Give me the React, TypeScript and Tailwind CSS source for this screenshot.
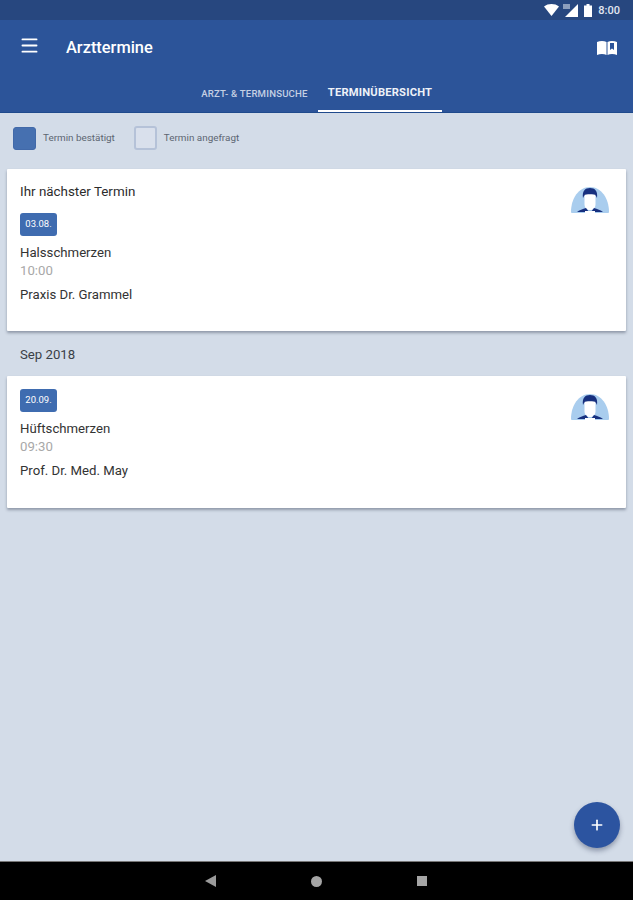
import { Menu, Plus } from "lucide-react"

function StatusBar() {
    return (
        <div className="h-5 bg-[#27477f] flex items-center justify-end pr-[13px]">
            <svg width="15" height="12" viewBox="0 0 15 12" className="mr-[4px]">
                <path d="M0 2.5C4 -.8 11 -.8 15 2.5L7.500 12Z" fill="#fff" />
            </svg>
            <svg width="16" height="13" viewBox="0 0 16 13" className="mr-[5px]">
                <path d="M15 0V13H2Z" fill="#fff" />
                <rect x="0" y="0" width="7" height="5" fill="#8d9fbd" />
            </svg>
            <svg width="8" height="13" viewBox="0 0 8 13" className="mr-[6px]">
                <path d="M2.500 0h3v1.500H8V13H0V1.500h2.500Z" fill="#fff" />
            </svg>
            <span className="text-[11px] leading-none font-medium text-[#e3e8f1]">8:00</span>
        </div>
    )
}

function AppBar() {
    return (
        <div className="h-[93px] bg-[#2c5499] border-b border-[#1f4a8c] flex flex-col">
            <div className="h-[56px] flex items-center pl-[21px] pr-[16px]">
                <Menu size={21} strokeWidth={2.2} className="text-white -ml-[2px] -mt-[5px]" />
                <span className="ml-[26px] text-[16.400px] font-medium text-white">Arzttermine</span>
                <svg width="20" height="16" viewBox="0 0 20 16" className="ml-auto">
                    <path d="M0 2C3 .5 7 .5 9.500 2V15C7 13.800 3 13.800 0 15Z" fill="#fff" />
                    <path d="M10.500 2C13 .5 17 .5 20 2V15C17 13.800 13 13.800 10.500 15Z" fill="#fff" />
                    <path d="M13 3H17V10L15 8.500 13 10Z" fill="#2c5499" />
                </svg>
            </div>
            <div className="flex-1 flex justify-center pl-[3px]">
                <div className="w-[124px] flex items-center justify-center pt-[1px] pr-[4px] text-[9.600px] font-medium tracking-[0.2px] text-[#c5d0e4]">
                    ARZT- &amp; TERMINSUCHE
                </div>
                <div className="w-[124px] ml-[-1px] flex items-center justify-center pt-[1px] pl-[1px] border-b-2 border-white text-[11.200px] font-bold tracking-[0.2px] text-[#eef2f8]">
                    TERMINÜBERSICHT
                </div>
            </div>
        </div>
    )
}

function Legend() {
    return (
        <div className="h-[56px] flex items-center pl-[13px] pb-[6px]">
            <div className="w-[23px] h-[23px] rounded-[3px] bg-[#4670b0] border border-[#4169a9]" />
            <span className="ml-[7px] text-[9.900px] text-[#5d6672]">Termin bestätigt</span>
            <div className="ml-[19px] w-[23px] h-[24px] rounded-[3px] border-2 border-[#b5c2d8] bg-[#d9e0ec]" />
            <span className="ml-[7px] text-[9.900px] text-[#5d6672]">Termin angefragt</span>
        </div>
    )
}

function Avatar() {
    return (
        <svg width="38" height="27" viewBox="0 0 38 27" className="mt-[5px]">
            <path d="M0 25C0 11 8 0 19 0S38 11 38 25C38 26 37 26 36 26H2C1 26 0 26 0 25Z" fill="#a9cdee" />
            <path d="M12 11C11 4 14 1 19 1S27 4 26 11L25 9H13Z" fill="#17307f" />
            <path d="M13.500 8C14 7 24 7 24.500 8V17C24.500 21 22 23 19 23S13.500 21 13.500 17Z" fill="#fff" />
            <path d="M6 25C8 23 12 22 15 21L18 25ZM32 25C30 23 26 22 23 21L20 25Z" fill="#17307f" />
            <rect x="14" y="24" width="10" height="2" fill="#fff" />
        </svg>
    )
}

function DateBadge({ date }: { date: string }) {
    return (
        <div className="w-[37px] h-[23px] rounded-[3px] bg-[#3f6cb0] flex items-center justify-center text-[9.500px] text-white">
            {date}
        </div>
    )
}

function AppointmentCard({ heading, date, title, time, doctor, className }: {
    heading?: string
    date: string
    title: string
    time: string
    doctor: string
    className: string
}) {
    return (
        <div className={`mx-[7px] bg-white rounded-[1px] shadow-[0_2px_3px_rgba(60,70,90,0.45)] flex justify-between pl-[13px] pr-[17px] ${className}`}>
            <div className="text-[13.200px] text-[#333]">
                {heading && <div className="h-[19px] leading-[19px] mb-[12px] text-[13.400px] text-[#2c2c2c]">{heading}</div>}
                <DateBadge date={date} />
                <div className="mt-[8px] h-[18px] leading-[18px]">{title}</div>
                <div className="h-[18px] leading-[18px] text-[#a8a8a8]">{time}</div>
                <div className="mt-[6px] h-[18px] leading-[18px]">{doctor}</div>
            </div>
            <Avatar />
        </div>
    )
}

export default function App() {
    return (
        <div className="relative w-[633px] h-[900px] flex flex-col bg-[#d3dce8] font-['Roboto',sans-serif]">
            <StatusBar />
            <AppBar />
            <Legend />
            <AppointmentCard
                className="h-[162px] pt-[13px]"
                heading="Ihr nächster Termin"
                date="03.08."
                title="Halsschmerzen"
                time="10:00"
                doctor="Praxis Dr. Grammel"
            />
            <div className="h-[45px] pl-[20px] pt-[2px] flex items-center text-[13.200px] text-[#3a3f47]">Sep 2018</div>
            <AppointmentCard
                className="h-[132px] pt-[13px]"
                date="20.09."
                title="Hüftschmerzen"
                time="09:30"
                doctor="Prof. Dr. Med. May"
            />
            <div className="flex-1" />
            <div className="h-[39px] bg-black border-t border-[#777] flex items-center justify-center gap-[95px] pr-[1px]">
                <svg width="11" height="12" viewBox="0 0 11 12"><path d="M11 0V12L0 6Z" fill="#9a9a9a" /></svg>
                <div className="w-[11px] h-[11px] rounded-full bg-[#a5a5a5]" />
                <div className="w-[10px] h-[10px] bg-[#a5a5a5]" />
            </div>
            <button className="absolute left-[574px] top-[802px] w-[46px] h-[46px] rounded-full bg-[#2c54a0] shadow-[0_3px_5px_rgba(40,50,80,0.4)] flex items-center justify-center">
                <Plus size={16} strokeWidth={2.5} className="text-white" />
            </button>
        </div>
    )
}
